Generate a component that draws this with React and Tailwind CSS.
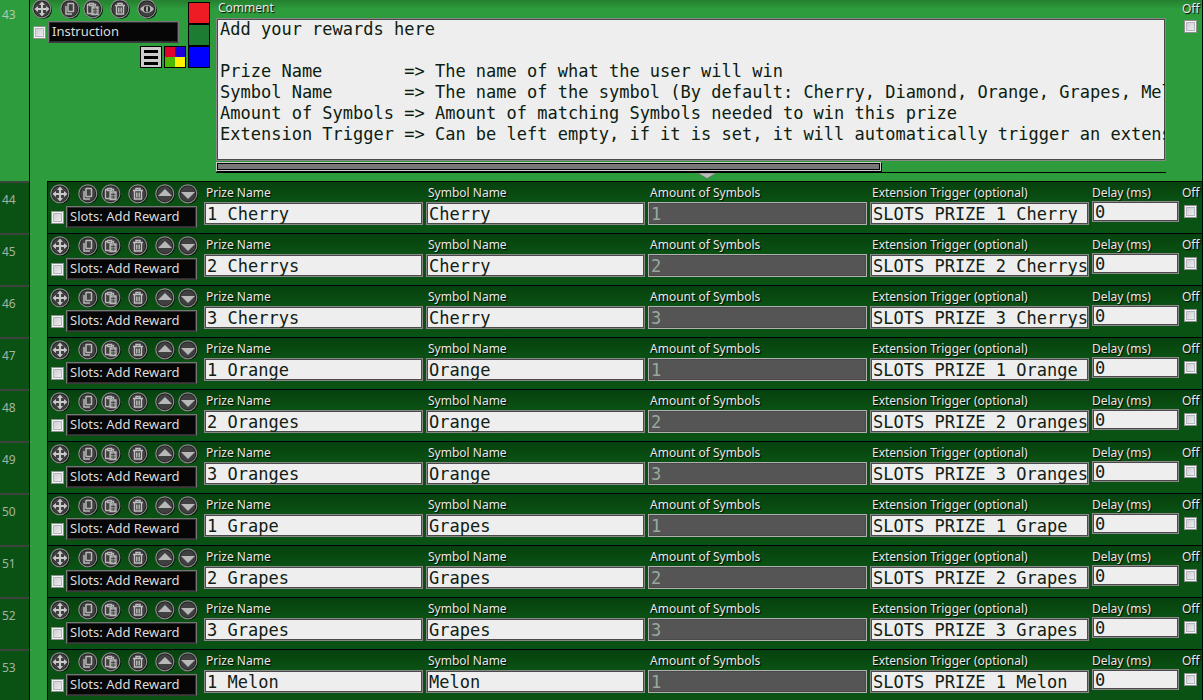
import React from "react";

const rewards = [
  ["1 Cherry", "Cherry", "1"],
  ["2 Cherrys", "Cherry", "2"],
  ["3 Cherrys", "Cherry", "3"],
  ["1 Orange", "Orange", "1"],
  ["2 Oranges", "Orange", "2"],
  ["3 Oranges", "Orange", "3"],
  ["1 Grape", "Grapes", "1"],
  ["2 Grapes", "Grapes", "2"],
  ["3 Grapes", "Grapes", "3"],
  ["1 Melon", "Melon", "1"],
];

const comment = `Add your rewards here

Prize Name        => The name of what the user will win
Symbol Name       => The name of the symbol (By default: Cherry, Diamond, Orange, Grapes, Melon)
Amount of Symbols => Amount of matching Symbols needed to win this prize
Extension Trigger => Can be left empty, if it is set, it will automatically trigger an extension`;

const glyphs = {
  Move: (
    <g fill="#c8c8c8">
      <path d="M10 2.5 13 6H7zM10 17.5 7 14h6zM2.5 10 6 7v6zM17.5 10 14 13V7z" />
      <path d="M9 5h2v10H9zM5 9h10v2H5z" />
    </g>
  ),
  Copy: (
    <g fill="none" stroke="#b8b8b8" strokeWidth="1.5">
      <rect x="8" y="4.500" width="5.500" height="8" rx="0.5" />
      <path d="M6 7v8h6" />
    </g>
  ),
  Paste: (
    <g fill="none" stroke="#b8b8b8" strokeWidth="1.3">
      <path d="M9 14.500H4.500v-9H6M11 5.500h1.500V7M6.500 4.500h4v2h-4z" />
      <path d="M9 8h6v7.500H9z" fill="#999" />
      <path d="M10 10.500h4.500M10 13h4.500M12.200 8.500v6.500" stroke="#444" strokeWidth="0.800" />
    </g>
  ),
  Delete: (
    <g fill="none" stroke="#c0c0c0" strokeWidth="1.4">
      <path d="M5 6.500h10M8 6V4.500h4V6M6.500 7v8h7V7M8.800 8.500v5M11.200 8.500v5" />
    </g>
  ),
  View: (
    <g>
      <path d="M3 10q7-8 14 0-7 8-14 0z" fill="#b8b8b8" />
      <circle cx="10" cy="10" r="3.200" fill="#2a2a2a" />
      <path d="M9.200 7.500h1.600v5H9.200z" fill="#c8c8c8" />
    </g>
  ),
  "Move up": <path d="M10 5 17 12H3z" fill="#b8b8b8" />,
  "Move down": <path d="M10 15 17 8H3z" fill="#b8b8b8" />,
};

function ToolButton({ name }) {
  return (
    <button type="button" aria-label={name} className="size-5 shrink-0">
      <svg viewBox="0 0 20 20" className="block size-5">
        <circle cx="10.800" cy="10.800" r="9.200" fill="#041206" />
        <circle cx="9.800" cy="9.800" r="9" fill="#1a1a1a" stroke="#8c8c8c" strokeWidth="1.200" />
        <circle cx="9.800" cy="9.800" r="7.600" fill="#404040" />
        {glyphs[name]}
      </svg>
    </button>
  );
}

function Tools({ last }) {
  return (
    <div className="flex h-5">
      <ToolButton name="Move" />
      <span className="w-2" />
      <ToolButton name="Copy" />
      <span className="w-[3px]" />
      <ToolButton name="Paste" />
      <span className="w-[7px]" />
      <ToolButton name="Delete" />
      <span className="w-[7px]" />
      {last.map((name, i) => (
        <div key={name} className={i > 0 ? "ml-[3px] flex" : "flex"}>
          <ToolButton name={name} />
        </div>
      ))}
    </div>
  );
}

function Tick({ label }) {
  return (
    <input
      type="checkbox"
      aria-label={label}
      className="block size-[13px] shrink-0 appearance-none border border-[#8e8f8f] bg-linear-to-br from-[#c3c6cc] to-[#f6f6f6] shadow-[inset_0_0_0_1px_#f4f4f4,inset_0_0_0_2px_#b4b8be] checked:from-[#2858a0]"
    />
  );
}

function NameBox({ value, tick }) {
  return (
    <div className="flex items-end">
      <div className="pb-1">
        <Tick label={tick} />
      </div>
      <input
        aria-label="Action name"
        defaultValue={value}
        className="ml-0.5 h-[22px] w-[131px] border border-[#777] border-b-[#3b3b3b] bg-[#060606] px-[3px] pb-0.5 text-[13px] leading-4 text-[#dcdcdc] shadow-[inset_0_0_0_1px_#303030]"
      />
    </div>
  );
}

const labelText = "block h-4 truncate text-xs leading-4 text-[#e8e8e8] [text-shadow:1px_1px_1px_#000]";
const fieldBase =
  "block w-full border pl-0.5 font-['DejaVu_Sans_Mono','Liberation_Mono',monospace] text-[17px] shadow-[inset_0_0_0_1px_#4a4a4a] ";

function Field({ label, value, kind }) {
  const look =
    kind === "locked"
      ? "h-[23px] leading-5 border-[#b0b0b0] bg-[#555] text-[#9aa89c]"
      : kind === "short"
        ? "h-[21px] leading-4 border-[#888] bg-[#eee] text-[#102014]"
        : "h-[23px] leading-5 border-[#888] bg-[#eee] text-[#102014]";
  return (
    <label className="block min-w-0">
      <span className={labelText + (kind === "short" ? "" : " mb-px pl-0.5")}>{label}</span>
      <input defaultValue={value} readOnly={kind === "locked"} className={fieldBase + look} />
    </label>
  );
}

function Off() {
  return (
    <div className="flex flex-col">
      <span className={labelText + " mb-1"}>Off</span>
      <div className="pl-0.5">
        <Tick label="Off" />
      </div>
    </div>
  );
}

function RewardRow({ number, reward }) {
  const [prize, symbol, amount] = reward;
  return (
    <section className="flex h-[52px]">
      <div className="w-[30px] shrink-0 border-t-2 border-r border-t-[#3c423c] border-r-black bg-[#0a5213] pt-2 pl-0.5 text-xs leading-[18px] text-[#a4b4a4]">
        {number}
      </div>
      <div className="w-[17px] shrink-0 bg-[#2d9c3c]" />
      <div className="grid min-w-0 grow grid-cols-[153px_repeat(4,minmax(0,1fr))_87px_20px] gap-x-[3px] border-t border-r border-l border-black bg-linear-to-b from-[#07410e] to-[#0a5213] to-40% pt-[3px]">
        <div className="-mt-px pl-0.5">
          <Tools last={["Move up", "Move down"]} />
          <div className="pt-0.5 pl-px">
            <NameBox value="Slots: Add Reward" tick={`Select action ${number}`} />
          </div>
        </div>
        <Field label="Prize Name" value={prize} />
        <Field label="Symbol Name" value={symbol} />
        <Field label="Amount of Symbols" value={amount} kind="locked" />
        <Field label="Extension Trigger (optional)" value={`SLOTS PRIZE ${prize}`} />
        <Field label="Delay (ms)" value="0" kind="short" />
        <Off />
      </div>
    </section>
  );
}

function CommentRow() {
  return (
    <section className="flex h-[181px] bg-linear-to-b from-[#25802f] to-[#2d9c3c] to-5%">
      <div className="w-[30px] shrink-0 border-r border-black bg-[#2d9c3c] pt-1.5 pl-0.5 text-xs leading-[18px] text-[#b4c8b4]">
        43
      </div>
      <div className="flex min-w-0 grow border-r border-black">
        <div className="w-[158px] shrink-0 pl-0.5">
          <div className="-mt-px">
            <Tools last={["View"]} />
          </div>
          <div className="flex pt-0.5 pl-px">
            <NameBox value="Instruction" tick="Select action 43" />
          </div>
          <div className="flex justify-end gap-0.5 pt-[3px] pr-0.5">
            <button type="button" aria-label="Options" className="flex size-[22px] flex-col justify-center gap-[3px] border border-black bg-[#ccc] px-[3px]">
              <span className="h-[3px] bg-black" />
              <span className="h-[3px] bg-black" />
              <span className="h-[3px] bg-black" />
            </button>
            <button type="button" aria-label="Colors" className="grid size-[22px] grid-cols-2 border border-black">
              <span className="bg-[#e2002c]" />
              <span className="bg-[#1c00dc]" />
              <span className="bg-[#4cb800]" />
              <span className="bg-[#fff200]" />
            </button>
          </div>
        </div>
        <div className="flex w-[22px] shrink-0 flex-col pt-0.5">
          <button type="button" aria-label="Red" className="size-[22px] border border-black bg-[#ee1c24]" />
          <button type="button" aria-label="Green" className="size-[22px] border border-black bg-[#1c7c32]" />
          <button type="button" aria-label="Blue" className="size-[22px] border border-black bg-[#0000fe]" />
        </div>
        <div className="ml-1.5 min-w-0 grow">
          <label className="block">
            <span className={labelText + " mb-0.5 pl-0.5"}>Comment</span>
            <textarea
              defaultValue={comment}
              wrap="off"
              spellCheck={false}
              className="block h-[143px] w-full resize-none overflow-hidden border border-[#888] bg-[#eee] px-[3px] font-['DejaVu_Sans_Mono','Liberation_Mono',monospace] text-[17px] leading-[21px] whitespace-pre text-[#0c2010] shadow-[inset_0_0_0_1px_#4a4a4a]"
            />
          </label>
          <div className="mt-px mb-px h-[9px] w-7/10 border border-[#ccc] bg-[#777] shadow-[inset_0_0_0_1px_#000,1px_1px_0_#000]" />
          <div className="flex justify-center border-t border-black pl-8">
            <svg viewBox="0 0 18 6" className="block h-1.5 w-[18px]">
              <path d="M0 0h18L9 5.500z" fill="#bbb" stroke="#666" strokeWidth="0.500" />
            </svg>
          </div>
        </div>
        <div className="ml-4 w-5 shrink-0 pt-px">
          <span className={labelText + " mb-[3px]"}>Off</span>
          <div className="pl-0.5">
            <Tick label="Off" />
          </div>
        </div>
      </div>
    </section>
  );
}

export default function App() {
  return (
    <main className="h-screen overflow-hidden bg-[#0a5213] font-['Noto_Sans','Open_Sans',sans-serif]">
      <CommentRow />
      {rewards.map((reward, i) => (
        <RewardRow key={i} number={44 + i} reward={reward} />
      ))}
    </main>
  );
}
